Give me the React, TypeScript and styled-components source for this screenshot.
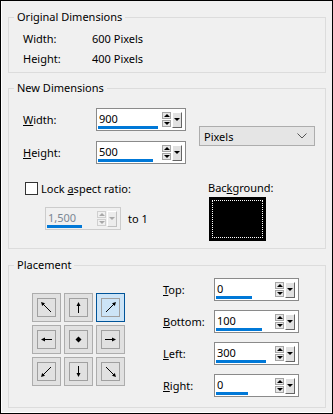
import styled, { createGlobalStyle } from 'styled-components';

const GlobalStyle = createGlobalStyle`
  html, body {
    margin: 0;
    padding: 0;
    background: #ffffff;
  }
  body {
    font-family: "Noto Sans", "Liberation Sans", sans-serif;
    font-size: 11px;
    color: #000;
  }
`;

type Dir = 'nw' | 'n' | 'ne' | 'w' | 'c' | 'e' | 'sw' | 's' | 'se';

const placement: Dir[] = ['nw', 'n', 'ne', 'w', 'c', 'e', 'sw', 's', 'se'];

const offsets = [
  { key: 'Top', label: 'T', rest: 'op:', value: '0', bar: 36 },
  { key: 'Bottom', label: 'B', rest: 'ottom:', value: '100', bar: 46 },
  { key: 'Left', label: 'L', rest: 'eft:', value: '300', bar: 50 },
  { key: 'Right', label: 'R', rest: 'ight:', value: '0', bar: 32 },
];

function ArrowIcon({ dir }: { dir: Dir }) {
  if (dir === 'c') {
    return (
      <svg width="17" height="17" viewBox="0 0 17 17">
        <polygon points="8.5,5.5 11.5,8.5 8.5,11.5 5.5,8.5" fill="#000" />
      </svg>
    );
  }
  const diagonal = dir.length === 2;
  const turn: Record<Dir, number> = {
    nw: 0, ne: 90, se: 180, sw: 270,
    n: 0, e: 90, s: 180, w: 270, c: 0,
  };
  return (
    <svg width="17" height="17" viewBox="0 0 17 17">
      <g transform={`rotate(${turn[dir]} 8.5 8.5)`}>
        {diagonal ? (
          <>
            <line x1="4.5" y1="4.5" x2="13" y2="13" stroke="#000" strokeWidth="1" />
            <polygon points="3,3 7,4.2 4.2,7" fill="#000" />
          </>
        ) : (
          <>
            <line x1="8.5" y1="5.5" x2="8.5" y2="14" stroke="#000" strokeWidth="1" />
            <polygon points="8.5,3 10.5,7 6.5,7" fill="#000" />
          </>
        )}
      </g>
    </svg>
  );
}

function Spin({
  value,
  width,
  bar,
  disabled,
}: {
  value: string;
  width: number;
  bar: number;
  disabled?: boolean;
}) {
  return (
    <SpinBox $width={width} $disabled={disabled}>
      <ValueArea>
        <ValueText $disabled={disabled}>{value}</ValueText>
        <Bar style={{ width: bar }} />
      </ValueArea>
      <Spinner>
        <Steps>
          <Step $disabled={disabled}>
            <Tri $up $disabled={disabled} />
          </Step>
          <Step $disabled={disabled}>
            <Tri $disabled={disabled} />
          </Step>
        </Steps>
        <DropButton $disabled={disabled}>
          <Tri $disabled={disabled} />
        </DropButton>
      </Spinner>
    </SpinBox>
  );
}

export default function App() {
  return (
    <>
      <GlobalStyle />
      <Window>
        <Group $height={64}>
          <Legend>Original Dimensions</Legend>
          <InfoGrid>
            <span>Width:</span>
            <span>600 Pixels</span>
            <span>Height:</span>
            <span>400 Pixels</span>
          </InfoGrid>
        </Group>

        <Group $height={169} $top={7}>
          <Legend>New Dimensions</Legend>
          <SizeGrid>
            <FieldLabel>
              <u>W</u>idth:
            </FieldLabel>
            <Spin value="900" width={90} bar={60} />
            <UnitSelect>
              <span>Pixels</span>
              <svg width="10" height="6" viewBox="0 0 10 6">
                <polyline points="0.5,0.5 5,5 9.5,0.5" fill="none" stroke="#555" strokeWidth="1" />
              </svg>
            </UnitSelect>
            <FieldLabel>
              <u>H</u>eight:
            </FieldLabel>
            <Spin value="500" width={90} bar={55} />
          </SizeGrid>

          <Lower>
            <LockColumn>
              <CheckRow>
                <CheckBox />
                <span>
                  Lock <u>a</u>spect ratio:
                </span>
              </CheckRow>
              <RatioRow>
                <Spin value="1,500" width={76} bar={35} disabled />
                <span>to 1</span>
              </RatioRow>
            </LockColumn>
            <BackgroundColumn>
              <span>
                Bac<u>k</u>ground:
              </span>
              <Swatch />
            </BackgroundColumn>
          </Lower>
        </Group>

        <Group $height={151} $top={8}>
          <Legend>Placement</Legend>
          <PlacementRow>
            <AnchorGrid>
              {placement.map((d) => (
                <AnchorButton key={d} $selected={d === 'ne'}>
                  <AnchorInner>
                    <ArrowIcon dir={d} />
                  </AnchorInner>
                </AnchorButton>
              ))}
            </AnchorGrid>
            <OffsetGrid>
              {offsets.map((o) => (
                <OffsetRow key={o.key}>
                  <FieldLabel>
                    <u>{o.label}</u>
                    {o.rest}
                  </FieldLabel>
                  <Spin value={o.value} width={85} bar={o.bar} />
                </OffsetRow>
              ))}
            </OffsetGrid>
          </PlacementRow>
        </Group>
      </Window>
    </>
  );
}

const Window = styled.div`
  box-sizing: border-box;
  width: 333px;
  height: 414px;
  border: 1px solid #000;
  box-shadow: inset 1px 0 0 #fff, inset 0 -1px 0 #fff;
  background: #f0f0f0;
  padding: 8px 6px 0 7px;
  display: flex;
  flex-direction: column;
`;

const Group = styled.fieldset<{ $height: number; $top?: number }>`
  box-sizing: border-box;
  height: ${(p) => p.$height}px;
  margin: ${(p) => p.$top ?? 0}px 0 0 0;
  padding: 0;
  min-width: 0;
  border: 1px solid #dcdcdc;
`;

const Legend = styled.legend`
  margin-left: 5px;
  padding: 0 3px;
  line-height: 16px;
`;

const InfoGrid = styled.div`
  display: grid;
  grid-template-columns: 69px auto;
  grid-auto-rows: 20px;
  align-items: center;
  margin: 3px 0 0 14px;
`;

const FieldLabel = styled.span`
  line-height: 16px;
`;

const SizeGrid = styled.div`
  display: grid;
  grid-template-columns: 73px 90px auto;
  grid-template-rows: 23px 23px;
  row-gap: 10px;
  align-items: center;
  margin: 12px 0 0 14px;
`;

const UnitSelect = styled.div`
  grid-column: 3;
  grid-row: 1 / span 2;
  box-sizing: border-box;
  width: 116px;
  height: 20px;
  margin-left: 13px;
  padding: 0 7px 0 4px;
  display: flex;
  align-items: center;
  justify-content: space-between;
  background: #e5e5e5;
  border: 1px solid #adadad;
`;

const SpinBox = styled.div<{ $width: number; $disabled?: boolean }>`
  box-sizing: border-box;
  width: ${(p) => p.$width}px;
  height: 23px;
  display: flex;
  border: 1px solid ${(p) => (p.$disabled ? '#cccccc' : '#8a8a8a')};
  background: ${(p) => (p.$disabled ? '#f0f0f0' : '#ffffff')};
`;

const ValueArea = styled.div`
  flex: 1;
  display: flex;
  flex-direction: column;
  padding: 0 0 1px 1px;
`;

const ValueText = styled.span<{ $disabled?: boolean }>`
  flex: 1;
  display: flex;
  align-items: center;
  padding: 1px 0 0 1px;
  color: ${(p) => (p.$disabled ? '#7a8794' : '#000')};
`;

const Bar = styled.div`
  height: 3px;
  background: #0078d7;
`;

const Spinner = styled.div`
  display: flex;
  align-items: center;
  gap: 1px;
  padding: 0 3px 0 2px;
`;

const Steps = styled.div`
  display: flex;
  flex-direction: column;
  gap: 1px;
`;

const Step = styled.div<{ $disabled?: boolean }>`
  box-sizing: border-box;
  width: 9px;
  height: 7px;
  display: flex;
  align-items: center;
  justify-content: center;
  background: ${(p) => (p.$disabled ? '#f0f0f0' : '#e6e6e6')};
  border: 1px solid ${(p) => (p.$disabled ? '#cfcfcf' : '#a5a5a5')};
`;

const Tri = styled.span<{ $up?: boolean; $disabled?: boolean }>`
  width: 0;
  height: 0;
  border-left: 3px solid transparent;
  border-right: 3px solid transparent;
  ${(p) => (p.$up ? 'border-bottom' : 'border-top')}: 3px solid
    ${(p) => (p.$disabled ? '#a8a8a8' : '#000')};
`;

const DropButton = styled.div<{ $disabled?: boolean }>`
  box-sizing: border-box;
  width: 10px;
  height: 16px;
  display: flex;
  align-items: center;
  justify-content: center;
  background: ${(p) => (p.$disabled ? '#ececec' : '#e1e1e1')};
  border-top: 1px solid #fff;
  border-left: 1px solid #fff;
  border-right: 1px solid ${(p) => (p.$disabled ? '#c0c0c0' : '#646464')};
  border-bottom: 1px solid ${(p) => (p.$disabled ? '#c0c0c0' : '#646464')};
`;

const Lower = styled.div`
  display: flex;
  margin: 16px 0 0 16px;
`;

const LockColumn = styled.div`
  width: 183px;
  display: flex;
  flex-direction: column;
`;

const CheckRow = styled.div`
  display: flex;
  align-items: center;
  gap: 3px;
  height: 16px;
`;

const CheckBox = styled.span`
  box-sizing: border-box;
  width: 13px;
  height: 13px;
  background: #fff;
  border: 1px solid #333;
`;

const RatioRow = styled.div`
  display: flex;
  align-items: center;
  gap: 7px;
  margin: 11px 0 0 20px;
`;

const BackgroundColumn = styled.div`
  display: flex;
  flex-direction: column;
  line-height: 16px;
`;

const Swatch = styled.div`
  width: 57px;
  height: 44px;
  margin: 1px 0 0 1px;
  background: #000;
  outline: 1px dotted #fff;
  outline-offset: -4px;
`;

const PlacementRow = styled.div`
  display: flex;
  align-items: flex-start;
  padding-left: 23px;
`;

const AnchorGrid = styled.div`
  display: grid;
  grid-template-columns: repeat(3, 29px);
  grid-auto-rows: 29px;
  gap: 3px;
  margin-top: 20px;
`;

const AnchorButton = styled.div<{ $selected?: boolean }>`
  box-sizing: border-box;
  display: flex;
  align-items: center;
  justify-content: center;
  background: ${(p) => (p.$selected ? '#cce4f7' : '#e1e1e1')};
  border: 1px solid ${(p) => (p.$selected ? '#005499' : '#adadad')};
`;

const AnchorInner = styled.div`
  box-sizing: border-box;
  width: 19px;
  height: 19px;
  display: flex;
  align-items: center;
  justify-content: center;
  border: 1px solid #a0a0a0;
`;

const OffsetGrid = styled.div`
  display: flex;
  flex-direction: column;
  gap: 9px;
  margin: 5px 0 0 38px;
`;

const OffsetRow = styled.div`
  display: grid;
  grid-template-columns: 51px 85px;
  align-items: center;
`;
